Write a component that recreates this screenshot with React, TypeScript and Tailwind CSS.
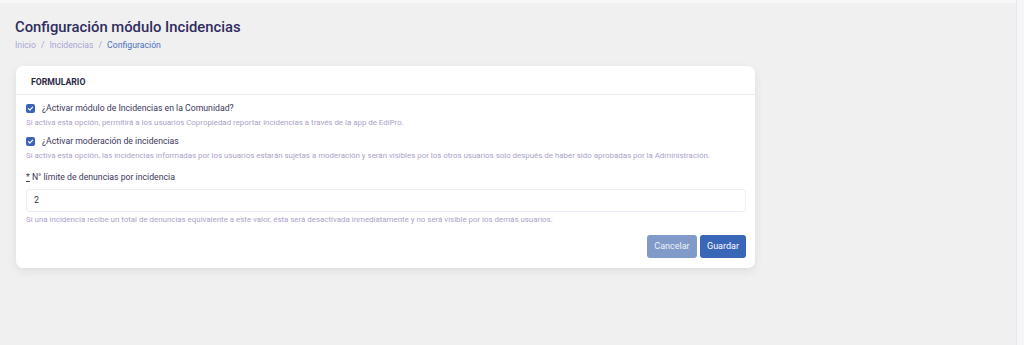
function Check() {
  return (
    <span className="flex h-[9px] w-[9px] shrink-0 items-center justify-center rounded-[2px] bg-[#3a63b5]">
      <svg viewBox="0 0 10 10" className="h-[7px] w-[7px]">
        <path d="M2 5.2 L4.1 7.2 L8 3" fill="none" stroke="white" strokeWidth="1.7" strokeLinecap="round" strokeLinejoin="round" />
      </svg>
    </span>
  );
}

export default function App() {
  return (
    <div className="h-[345px] w-[1024px] overflow-hidden bg-[#f0f0f1] font-['Roboto',sans-serif] flex">
      <div className="flex-1 flex flex-col">
        <div className="h-[3px] bg-[#f7f7fa]" />
        <div className="px-[15px] pt-[15px]">
          <h1 className="text-[14.8px] font-medium leading-[18px] text-[#2f2c5e]">
            Configuración módulo Incidencias
          </h1>
          <div className="mt-[4px] flex items-center gap-[5px] text-[8.7px] leading-[11px] text-[#aaa6d2]">
            <span>Inicio</span>
            <span>/</span>
            <span>Incidencias</span>
            <span>/</span>
            <span className="text-[#4d6fbd]">Configuración</span>
          </div>

          <div className="mt-[15px] ml-px w-[739px] rounded-[7px] bg-white shadow-[0_3px_10px_rgba(0,0,0,0.08)]">
            <div className="border-b border-[#ecebf7] px-[15px] pt-[10px] pb-[6px] text-[8.7px] font-bold leading-[12px] text-[#2a2746]">
              FORMULARIO
            </div>
            <div className="pl-[10px] pr-[9px] pt-[8px] pb-[10px]">
              <label className="flex items-center gap-[7px] text-[8.7px] leading-[11px] text-[#3a3659]">
                <Check />
                ¿Activar módulo de Incidencias en la Comunidad?
              </label>
              <p className="mt-[4px] text-[7.9px] leading-[10px] text-[#ab9fcb]">
                Si activa esta opción, permitirá a los usuarios Copropiedad reportar incidencias a través de la app de EdiPro.
              </p>

              <label className="mt-[8px] flex items-center gap-[7px] text-[8.7px] leading-[11px] text-[#3a3659]">
                <Check />
                ¿Activar moderación de incidencias
              </label>
              <p className="mt-[4px] text-[7.9px] leading-[10px] text-[#ab9fcb]">
                Si activa esta opción, las incidencias informadas por los usuarios estarán sujetas a moderación y serán visibles por los otros usuarios solo después de haber sido aprobadas por la Administración.
              </p>

              <div className="mt-[11px] text-[8.7px] leading-[11px] text-[#3a3659]">
                <span className="underline">*</span> N° límite de denuncias por incidencia
              </div>
              <div className="mt-[6px] flex h-[23px] items-center rounded-[3px] border border-[#eeedf7] px-[7px] text-[9px] text-[#3a3659]">
                2
              </div>
              <p className="mt-[3px] text-[7.9px] leading-[10px] text-[#ab9fcb]">
                Si una incidencia recibe un total de denuncias equivalente a este valor, ésta será desactivada inmediatamente y no será visible por los demás usuarios.
              </p>

              <div className="mt-[10px] flex justify-end gap-[3px]">
                <button className="h-[23px] w-[50px] rounded-[3px] bg-[#809bc9] text-[9px] text-[#eef1f8]">
                  Cancelar
                </button>
                <button className="h-[23px] w-[46px] rounded-[3px] bg-[#3a66b7] text-[9px] text-white">
                  Guardar
                </button>
              </div>
            </div>
          </div>
        </div>
      </div>
      <div className="w-[8px] border-l border-[#e6e6ee] bg-[#f6f6f9]" />
    </div>
  );
}
